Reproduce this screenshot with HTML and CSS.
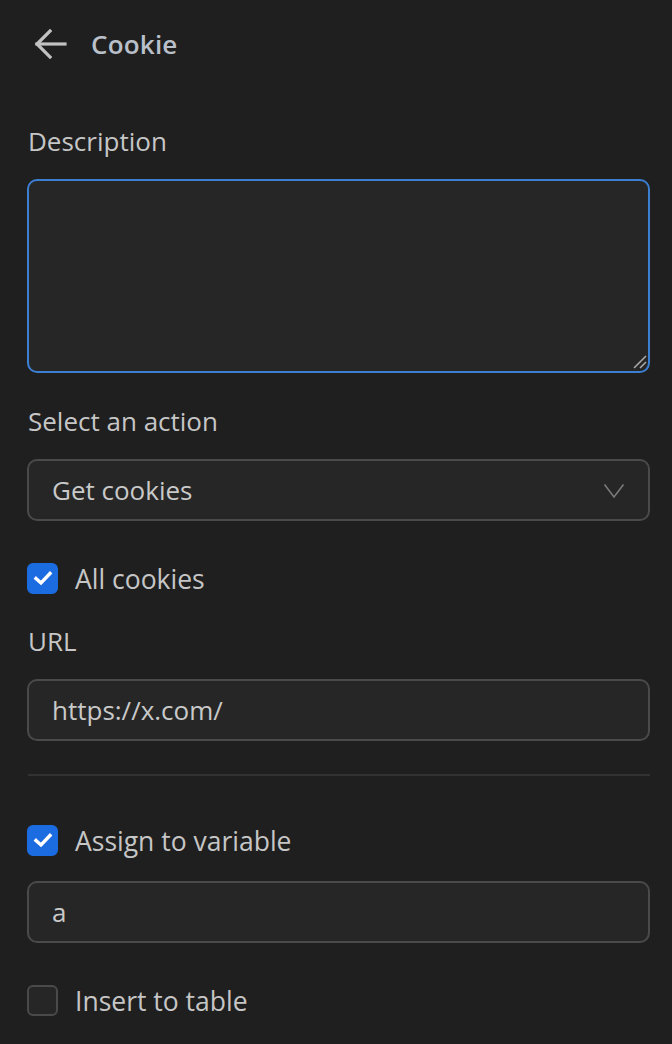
FILE: index.html
```html
<!DOCTYPE html>
<html lang="en">
<head>
<meta charset="utf-8">
<title>Cookie</title>
<link rel="stylesheet" href="styles.css">
</head>
<body>
<div class="panel">
  <header class="header">
    <button class="back" aria-label="Back">
      <svg width="34" height="32" viewBox="0 0 34 32" fill="none" stroke="#c2c2c2" stroke-width="3.2" stroke-linecap="square">
        <path d="M3 16 H31"/>
        <path d="M16 3 L3 16 L16 29"/>
      </svg>
    </button>
    <h1 class="title">Cookie</h1>
  </header>

  <label class="label label-desc">Description</label>
  <div class="textarea-wrap">
    <textarea class="textarea"></textarea>
    <svg class="grip" width="14" height="14" viewBox="0 0 14 14" fill="none" stroke="#a8a8a8" stroke-width="1.6">
      <path d="M1 13 L13 1"/>
      <path d="M7 13 L13 7"/>
    </svg>
  </div>

  <label class="label label-gap">Select an action</label>
  <div class="control select">
    <span>Get cookies</span>
    <svg class="chev" width="22" height="16" viewBox="0 0 22 16" fill="none" stroke="#7a7a7a" stroke-width="1.6">
      <path d="M1.5 1.5 L11 14 L20.5 1.5"/>
    </svg>
  </div>

  <div class="check-row row-all">
    <span class="box checked">
      <svg width="20" height="16" viewBox="0 0 20 16" fill="none" stroke="#fff" stroke-width="3.4" stroke-linecap="square">
        <path d="M3 8.5 L8 13 L17 3.5"/>
      </svg>
    </span>
    <span class="check-text">All cookies</span>
  </div>

  <label class="label label-url">URL</label>
  <div class="control"><span>https://x.com/</span></div>

  <hr class="divider">

  <div class="check-row row-assign">
    <span class="box checked">
      <svg width="20" height="16" viewBox="0 0 20 16" fill="none" stroke="#fff" stroke-width="3.4" stroke-linecap="square">
        <path d="M3 8.5 L8 13 L17 3.5"/>
      </svg>
    </span>
    <span class="check-text">Assign to variable</span>
  </div>
  <div class="control control-var"><span>a</span></div>

  <div class="check-row row-insert">
    <span class="box"></span>
    <span class="check-text">Insert to table</span>
  </div>
</div>
</body>
</html>
```

FILE: styles.css
```css
html, body {
  margin: 0;
  padding: 0;
  background: #1f1f1f;
}
body {
  font-family: "Open Sans", "Noto Sans", sans-serif;
  color: #c6c6c6;
  font-size: 26px;
  line-height: 36px;
}
.panel {
  display: flex;
  flex-direction: column;
  padding: 14px 22px 0 28px;
  height: 1030px;
  overflow: hidden;
}
.header {
  display: flex;
  align-items: center;
  height: 60px;
  gap: 23px;
}
.back {
  background: none;
  border: 0;
  padding: 0;
  margin-left: 6px;
  display: flex;
}
.title {
  margin: 0;
  font-size: 26px;
  font-weight: 600;
  color: #b9c0ca;
  letter-spacing: 0.2px;
}
.label {
  display: block;
  height: 36px;
  color: #c6c6c6;
}
.label-desc { margin-top: 49px; }
.label-gap { margin-top: 30px; }
.label-url { margin-top: 26px; }
.textarea-wrap {
  position: relative;
  margin-top: 20px;
  height: 194px;
}
.textarea {
  box-sizing: border-box;
  display: block;
  margin: 0 0 0 -1px;
  width: calc(100% + 1px);
  height: 194px;
  background: #262626;
  border: 2px solid #3b7fd2;
  border-radius: 10px;
  outline: none;
  resize: none;
  font: inherit;
  color: inherit;
}
.grip {
  position: absolute;
  right: 3px;
  bottom: 4px;
}
.control {
  box-sizing: border-box;
  margin: 20px 0 0 -1px;
  height: 62px;
  background: #262626;
  border: 2px solid #4a4a4a;
  border-radius: 10px;
  display: flex;
  align-items: center;
  justify-content: space-between;
  padding: 0 22px 0 23px;
  color: #c9c9c9;
}
.chev { margin-right: 1px; margin-top: 1px; }
.check-row {
  display: flex;
  align-items: center;
  height: 36px;
  gap: 17px;
  font-size: 26.5px;
}
.row-all { margin-top: 40px; }
.row-assign { margin-top: 47px; }
.row-insert { margin-top: 40px; }
.box {
  box-sizing: border-box;
  width: 31px;
  height: 31px;
  border-radius: 6px;
  border: 2px solid #4a4a4a;
  background: #262626;
  display: flex;
  align-items: center;
  justify-content: center;
  margin: -2px 0 0 -1px;
}
.box.checked {
  background: #1b6ce0;
  border-color: #1b6ce0;
}
.check-text { color: #c6c6c6; }
.control-var { margin-top: 22px; }
.divider {
  margin: 33px 0 0;
  border: 0;
  height: 2px;
  background: #323232;
}
```
